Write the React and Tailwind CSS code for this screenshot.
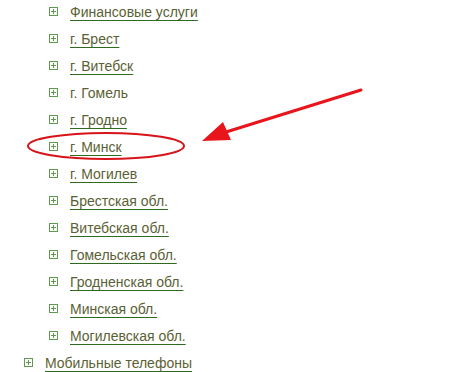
import React from "react";

const items = [
  { label: "Финансовые услуги", link: true },
  { label: "г. Брест", link: true },
  { label: "г. Витебск", link: true },
  { label: "г. Гомель", link: false },
  { label: "г. Гродно", link: true },
  { label: "г. Минск", link: true },
  { label: "г. Могилев", link: true },
  { label: "Брестская обл.", link: true },
  { label: "Витебская обл.", link: true },
  { label: "Гомельская обл.", link: true },
  { label: "Гродненская обл.", link: true },
  { label: "Минская обл.", link: true },
  { label: "Могилевская обл.", link: true },
];

const PlusBox = () => (
  <svg width="9" height="9" viewBox="0 0 9 9" className="shrink-0">
    <rect x="0.5" y="0.5" width="8" height="8" fill="none" stroke="#5f9a4f" />
    <path d="M2 4.5H7M4.5 2V7" stroke="#5f9a4f" />
  </svg>
);

const Row = ({ label, link }) => (
  <div className="flex items-center h-[27px] gap-[12px]">
    <PlusBox />
    <span
      className={
        "text-[14px] leading-none text-[#5b5f34] " +
        (link ? "underline decoration-[#2e6b1e] underline-offset-[3px]" : "")
      }
    >
      {label}
    </span>
  </div>
);

export default function App() {
  return (
    <div
      className="relative w-[454px] h-[372px] bg-white overflow-hidden"
      style={{ fontFamily: "'Liberation Sans', Arial, sans-serif" }}
    >
      <div className="-mt-[2px]">
        <div className="pl-[49px]">
          {items.map((it) => (
            <Row key={it.label} {...it} />
          ))}
        </div>
        <div className="pl-[24px]">
          <Row label="Мобильные телефоны" link />
        </div>
      </div>

      {/* annotation: ellipse + arrow */}
      <svg className="absolute inset-0 pointer-events-none" width="454" height="372">
        <ellipse cx="106" cy="146" rx="78" ry="13" fill="none" stroke="#d7141a" strokeWidth="2" />
        <line x1="361" y1="90" x2="226" y2="132" stroke="#e8161c" strokeWidth="3" strokeLinecap="round" />
        <polygon points="202,141 223,122 231,140" fill="#e8161c" />
      </svg>
    </div>
  );
}
